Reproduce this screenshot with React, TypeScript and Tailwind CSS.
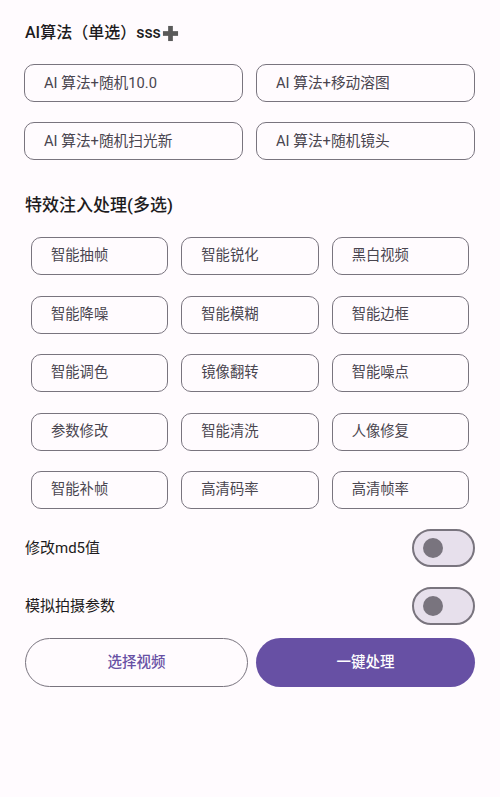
import React from "react";

const font = { fontFamily: 'Roboto, "Noto Sans CJK SC", sans-serif' };

function Outline({ label, className = "" }: { label: string; className?: string }) {
  return (
    <div
      className={`h-[38px] flex items-center rounded-[10px] border border-[#79747E] text-[#49454F] ${className}`}
    >
      {label}
    </div>
  );
}

function Switch() {
  return (
    <div className="w-[63px] h-[38px] rounded-full border-2 border-[#79747E] bg-[#E7E0EC] flex items-center pl-[9px]">
      <div className="w-[20px] h-[20px] rounded-full bg-[#79747E]" />
    </div>
  );
}

export default function App() {
  const algos = ["AI 算法+随机10.0", "AI 算法+移动溶图", "AI 算法+随机扫光新", "AI 算法+随机镜头"];
  const effects = [
    "智能抽帧", "智能锐化", "黑白视频",
    "智能降噪", "智能模糊", "智能边框",
    "智能调色", "镜像翻转", "智能噪点",
    "参数修改", "智能清洗", "人像修复",
    "智能补帧", "高清码率", "高清帧率",
  ];
  return (
    <div style={font} className="w-[500px] h-[797px] bg-[#FFFBFE] pl-[24px] pr-[25px] flex flex-col">
      <div className="mt-[22px] h-[22px] flex items-center pl-[1px] text-[16px] font-medium text-[#1D1B20]">
        <span>AI算法（单选）sss</span>
        <svg width="17" height="17" viewBox="0 0 18 18" className="ml-[1px]">
          <rect x="6.5" y="1" width="5" height="16" fill="#5a5a5a" />
          <rect x="1" y="6.5" width="16" height="5" fill="#5a5a5a" />
        </svg>
      </div>
      <div className="mt-[20px] grid grid-cols-2 gap-x-[13px] gap-y-[20px]">
        {algos.map((a) => (
          <Outline key={a} label={a} className="pl-[19px] text-[14.7px]" />
        ))}
      </div>
      <div className="mt-[35px] h-[22px] flex items-center pl-[1px] text-[17px] font-medium text-[#1D1B20]">
        特效注入处理(多选)
      </div>
      <div className="mt-[20px] ml-[7px] mr-[6px] grid grid-cols-3 gap-x-[13px] gap-y-[20.5px]">
        {effects.map((e) => (
          <Outline key={e} label={e} className="pl-[19px] text-[14.3px]" />
        ))}
      </div>
      <div className="mt-[20px] flex items-center justify-between h-[38px] pl-[1px]">
        <span className="text-[15px] text-[#1D1B20]">修改md5值</span>
        <Switch />
      </div>
      <div className="mt-[20px] flex items-center justify-between h-[38px] pl-[1px]">
        <span className="text-[15px] text-[#1D1B20]">模拟拍摄参数</span>
        <Switch />
      </div>
      <div className="mt-[13px] flex justify-between">
        <div className="ml-[1px] w-[223px] h-[49px] rounded-full border border-[#79747E] flex items-center justify-center text-[14.5px] font-medium text-[#6750A4]">
          选择视频
        </div>
        <div className="w-[219px] h-[49px] rounded-full bg-[#6750A4] flex items-center justify-center text-[14.5px] font-medium text-white">
          一键处理
        </div>
      </div>
    </div>
  );
}
